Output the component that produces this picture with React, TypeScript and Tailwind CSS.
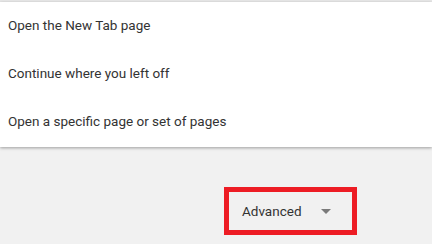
export default function App() {
  const options = [
    "Open the New Tab page",
    "Continue where you left off",
    "Open a specific page or set of pages",
  ];

  return (
    <div className="h-[244px] w-[432px] overflow-hidden bg-[#f1f1f1] font-['Roboto',sans-serif]">
      <div className="h-[2px] bg-[#e8e8e8]" />
      <div className="flex h-[145px] flex-col bg-white pt-[0px] shadow-[0_1px_3px_rgba(0,0,0,0.35)]">
        {options.map((label, i) => (
          <div
            key={label}
            className={
              i === 0
                ? "flex h-[47px] items-center pl-[8px] text-[13.5px] text-[#333333]"
                : "flex h-[48px] items-center pl-[8px] text-[13.5px] text-[#333333]"
            }
          >
            {label}
          </div>
        ))}
      </div>
      <div className="pl-[224px] pt-[40px]">
        <button className="flex h-[48px] w-[133px] items-center border-[5px] border-[#ed1c24] pl-[13px] text-[13.5px] text-[#333333]">
          <span>Advanced</span>
          <svg
            className="ml-[19px]"
            width="10"
            height="5"
            viewBox="0 0 10 5"
          >
            <path d="M0 0 L10 0 L5 5 Z" fill="#7a7a7a" />
          </svg>
        </button>
      </div>
    </div>
  );
}
